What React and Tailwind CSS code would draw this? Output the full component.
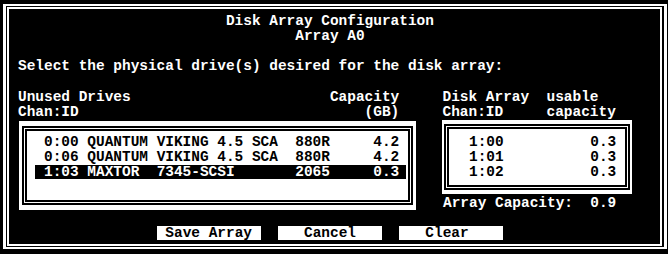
import React from "react";

const ROW = "h-[15.14px] leading-[15.14px] whitespace-pre";

const sp = (n) => " ".repeat(n);

const drives = [
  { line: "0:00 QUANTUM VIKING 4.5 SCA  880R" + sp(5) + "4.2", active: false },
  { line: "0:06 QUANTUM VIKING 4.5 SCA  880R" + sp(5) + "4.2", active: false },
  { line: "1:03 MAXTOR  7345-SCSI" + sp(7) + "2065" + sp(5) + "0.3", active: true },
];

const members = ["1:00", "1:01", "1:02"];

const buttons = [" Save Array ", "   Cancel   ", "   Clear    "];

const DoubleBox = ({ className, inner, children }) => (
  <div className={className}>
    <div className="h-full border-2 border-black p-px">
      <div className={"h-full border-2 border-black " + inner}>{children}</div>
    </div>
  </div>
);

export default function App() {
  return (
    <div className="w-[668px] h-[254px] overflow-hidden bg-black font-['Liberation_Mono',monospace] text-[14.45px] font-bold text-white">
      {/* outer double frame */}
      <div className="ml-[3px] mt-[4px] h-[245px] w-[664px] border-x-[3px] border-y-2 border-white py-px pl-px pr-[2px]">
        <div className="h-full border-2 border-white pl-[9px] pt-[5px]">
          <div className={ROW}>{sp(24)}Disk Array Configuration</div>
          <div className={ROW}>{sp(32)}Array A0</div>
          <div className={ROW}> </div>
          <div className={ROW}>Select the physical drive(s) desired for the disk array:</div>
          <div className={ROW}> </div>
          <div className={ROW}>
            {"Unused Drives" + sp(23) + "Capacity" + sp(5) + "Disk Array" + sp(2) + "usable"}
          </div>
          <div className={ROW}>
            {"Chan:ID" + sp(33) + "(GB)" + sp(5) + "Chan:ID" + sp(5) + "capacity"}
          </div>

          {/* drive lists */}
          <div className="flex h-[90.84px] items-start">
            <DoubleBox
              className="ml-px mt-px h-[89px] w-[397px] bg-white px-[3px] py-[5px]"
              inner="pt-[4px] text-black"
            >
              {drives.map((d) => (
                <div
                  key={d.line}
                  className={
                    d.active
                      ? "ml-[8px] mb-[1.14px] h-[14px] w-[371px] bg-black pl-[9px] leading-[14px] whitespace-pre text-white"
                      : "ml-[8px] h-[15.14px] w-[371px] pl-[9px] leading-[15.14px] whitespace-pre"
                  }
                >
                  {d.line}
                </div>
              ))}
            </DoubleBox>

            <div className="ml-[26px] flex flex-col">
              <DoubleBox
                className="h-[74px] w-[190px] bg-white px-[2px] py-[4px]"
                inner="pl-[20px] pt-[6px] text-black"
              >
                {members.map((m) => (
                  <div key={m} className={ROW}>
                    {m + sp(10) + "0.3"}
                  </div>
                ))}
              </DoubleBox>
              <div className={"ml-px mt-[1.7px] " + ROW}>{"Array Capacity:" + sp(2) + "0.9"}</div>
            </div>
          </div>

          <div className={ROW}> </div>

          {/* buttons */}
          <div className="flex h-[15.14px] gap-[17.34px] pl-[138.7px]">
            {buttons.map((b) => (
              <span
                key={b}
                className="h-[14px] w-[104px] bg-white leading-[14px] whitespace-pre text-black"
              >
                {b}
              </span>
            ))}
          </div>
        </div>
      </div>
    </div>
  );
}
